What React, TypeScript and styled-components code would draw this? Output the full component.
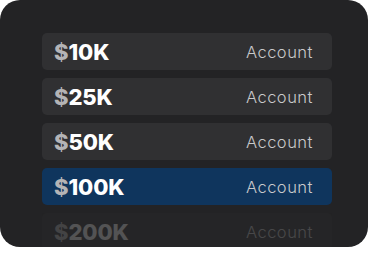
import React from 'react'
import styled, { createGlobalStyle } from 'styled-components'

const GlobalStyle = createGlobalStyle`
	html, body {
		margin: 0;
		padding: 0;
		background: #ffffff;
	}
	body {
		font-family: 'Inter', 'Open Sans', sans-serif;
	}
`

interface Plan {
	amount: string
	active?: boolean
	faded?: boolean
}

const plans: Plan[] = [
	{ amount: '10K' },
	{ amount: '25K' },
	{ amount: '50K' },
	{ amount: '100K', active: true },
	{ amount: '200K', faded: true }
]

const App: React.FC = () => {
	return (
		<>
			<GlobalStyle />
			<Card>
				<List>
					{plans.map((plan) => (
						<Row key={plan.amount} $active={plan.active} $faded={plan.faded}>
							<Amount>
								<Dollar>$</Dollar>
								{plan.amount}
							</Amount>
							<Label>Account</Label>
						</Row>
					))}
				</List>
			</Card>
		</>
	)
}

export default App

const Card = styled.div`
	width: 368px;
	height: 247px;
	box-sizing: border-box;
	padding: 33px 36px 0 42px;
	background: #232325;
	border-radius: 20px;
	overflow: hidden;
`

const List = styled.div`
	display: flex;
	flex-direction: column;
	gap: 8px;
`

const Row = styled.div<{ $active?: boolean; $faded?: boolean }>`
	height: 37px;
	flex-shrink: 0;
	display: flex;
	align-items: center;
	justify-content: space-between;
	padding: 0 19px 0 12px;
	border-radius: 5px;
	background: ${({ $active }) => ($active ? '#0f355d' : '#303032')};
	opacity: ${({ $faded }) => ($faded ? 0.22 : 1)};
`

const Amount = styled.div`
	font-family: 'Inter', sans-serif;
	font-weight: 800;
	font-size: 22px;
	color: #ffffff;
	letter-spacing: -0.1px;
`

const Dollar = styled.span`
	color: #b4b4b6;
`

const Label = styled.div`
	font-family: 'Inter', sans-serif;
	font-weight: 300;
	font-size: 16.5px;
	color: #c9c9cb;
	letter-spacing: 0.5px;
`
